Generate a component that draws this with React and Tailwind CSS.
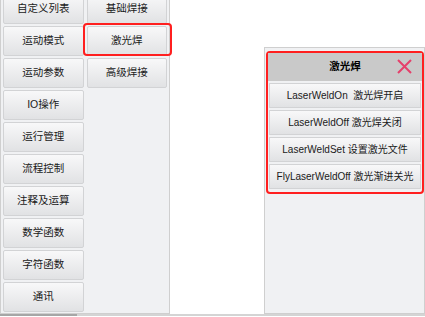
import React from "react";

const leftCol = ["自定义列表", "运动模式", "运动参数", "IO操作", "运行管理", "流程控制", "注释及运算", "数学函数", "字符函数", "通讯"];
const rightCol = ["基础焊接", "激光焊", "高级焊接"];
const rows = [
  "LaserWeldOn  激光焊开启",
  "LaserWeldOff 激光焊关闭",
  "LaserWeldSet 设置激光文件",
  "FlyLaserWeldOff 激光渐进关光",
];

const btn =
  "h-[30px] flex items-center justify-center border border-[#d2d3d5] rounded-[2px] bg-gradient-to-b from-[#f8f8f9] to-[#e1e2e4] text-[#1a1a1a] text-[10.5px]";

export default function App() {
  return (
    <div
      className="w-[425px] h-[317px] bg-white relative overflow-hidden flex"
      style={{ fontFamily: '"Liberation Sans", "Noto Sans CJK SC", sans-serif' }}
    >
      <div className="w-[170px] h-[323px] mt-[-9px] border border-[#cfcfcf] bg-[#f0f1f3] px-[2px] pt-[2px] flex gap-[3px] shrink-0">
        <div className="w-[81px] flex flex-col gap-[2px]">
          {leftCol.map((t) => (
            <div key={t} className={btn}>{t}</div>
          ))}
        </div>
        <div className="w-[81px] flex flex-col gap-[2px]">
          {rightCol.map((t) => (
            <div key={t} className={btn}>{t}</div>
          ))}
        </div>
      </div>

      <div className="absolute left-[83px] top-[23px] w-[89px] h-[33px] border-2 border-[#ff1f1f] rounded-[4px]" />

      <div className="ml-[94px] mt-[47px] w-[161px] h-[267px] border border-[#cfcfcf] bg-[#f0f1f3] pl-[1px] pt-[3px]">
        <div className="w-[158px] h-[143px] border-2 border-[#ff1f1f] rounded-[4px] flex flex-col">
          <div className="h-[28px] shrink-0 bg-[#c9c9c9] relative flex items-center justify-center">
            <span className="text-[10.5px] font-bold text-black">激光焊</span>
            <svg className="absolute right-[9px] top-[5px]" width="17" height="17" viewBox="0 0 17 17">
              <path d="M2 2 L15 15 M15 2 L2 15" stroke="#e5406b" strokeWidth="2" />
            </svg>
          </div>
          <div className="flex flex-col gap-[2px] px-[1px] pt-[2px]">
            {rows.map((t) => (
              <div
                key={t}
                className="h-[25px] shrink-0 flex items-center justify-center border border-[#d2d3d5] bg-gradient-to-b from-[#f8f8f9] to-[#e1e2e4] text-[10px] text-[#1a1a1a] whitespace-pre"
              >
                {t}
              </div>
            ))}
          </div>
        </div>
      </div>

      <div className="absolute left-0 bottom-[1px] w-[425px] h-[2px] bg-[#d4d4d4]">
        <div className="w-[77px] h-[2px] bg-[#a6a6a6]" />
      </div>
    </div>
  );
}
